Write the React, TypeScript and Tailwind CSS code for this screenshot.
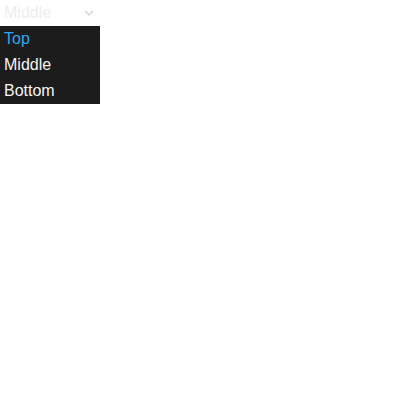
import React from "react";

export default function App() {
  return (
    <div className="w-[400px] h-[400px] bg-white" style={{ fontFamily: '"Liberation Sans", Arial, sans-serif' }}>
      <div className="w-[100px]">
        <div className="h-[26px] flex items-center justify-between pl-[4px] pr-[6px] text-[16px] text-[#eeeeee]">
          <span>Middle</span>
          <svg width="10" height="6" viewBox="0 0 10 6" fill="none" stroke="#cccccc" strokeWidth="1.2">
            <path d="M1 1l4 4 4-4" />
          </svg>
        </div>
        <div className="bg-[#1c1c1c] text-[16px] flex flex-col">
          <div className="h-[26px] flex items-center pl-[4px] text-[#29a8f0]">Top</div>
          <div className="h-[26px] flex items-center pl-[4px] text-[#f5f5f5]">Middle</div>
          <div className="h-[26px] flex items-center pl-[4px] text-[#f5f5f5]">Bottom</div>
        </div>
      </div>
    </div>
  );
}
